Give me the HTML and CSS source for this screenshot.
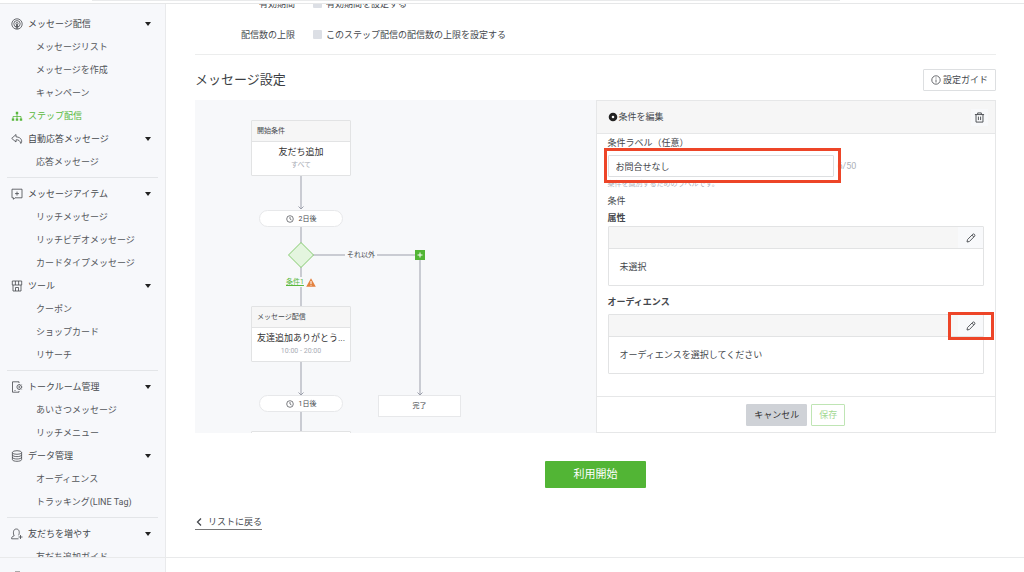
FILE: index.html
```html
<!DOCTYPE html>
<html lang="ja">
<head>
<meta charset="utf-8">
<title>ステップ配信</title>
<link rel="stylesheet" href="styles.css">
</head>
<body>
<div class="app">
  <div class="topbar"><div class="topbar-tab"></div></div>
  <div class="shell">
    <nav class="sidebar">
      <ul class="menu">
        <li><button class="menu-head" type="button"><svg class="icon" viewBox="0 0 12 12"><circle cx="6" cy="6" r="5.2"/><circle cx="6" cy="5.8" r="3.2"/><circle cx="6" cy="5.6" r="1.1"/><path d="M5.2 11 5.5 7h1l.3 4"/></svg>メッセージ配信<span class="caret"></span></button></li>
        <li><a class="menu-sub" href="#">メッセージリスト</a></li>
        <li><a class="menu-sub" href="#">メッセージを作成</a></li>
        <li><a class="menu-sub" href="#">キャンペーン</a></li>
        <li><a class="menu-head active" href="#"><svg class="icon" viewBox="0 0 12 12"><path d="M6 4v5M2 9V6.500h8V9"/><path class="solid" d="M4.800 1.800h2.400v2.400H4.800zM.8 8.500h2.400v2.300H.8zM4.800 8.500h2.400v2.300H4.800zM8.800 8.500h2.400v2.300H8.800z"/></svg>ステップ配信</a></li>
        <li><button class="menu-head" type="button"><svg class="icon" viewBox="0 0 12 12"><path d="M5 1.500.7 5.400 5 9V6.800c2.500-.2 4 .8 4.800 3.700 1.700-1.500 1.400-6.300-4.800-6.700z"/></svg>自動応答メッセージ<span class="caret"></span></button></li>
        <li><a class="menu-sub" href="#">応答メッセージ</a></li>
      </ul>
      <ul class="menu">
        <li><button class="menu-head" type="button"><svg class="icon" viewBox="0 0 12 12"><path d="M1 1.200h10v8.600H4L2.500 11.300V9.800H1zM6 3.600v4M4 5.600h4"/></svg>メッセージアイテム<span class="caret"></span></button></li>
        <li><a class="menu-sub" href="#">リッチメッセージ</a></li>
        <li><a class="menu-sub" href="#">リッチビデオメッセージ</a></li>
        <li><a class="menu-sub" href="#">カードタイプメッセージ</a></li>
        <li><button class="menu-head" type="button"><svg class="icon" viewBox="0 0 12 12"><path d="M1.300 1h9.400v4H1.300zM4.400 1v4M7.600 1v4M2 5v6h8V5M4.500 11V7.500h3V11"/></svg>ツール<span class="caret"></span></button></li>
        <li><a class="menu-sub" href="#">クーポン</a></li>
        <li><a class="menu-sub" href="#">ショップカード</a></li>
        <li><a class="menu-sub" href="#">リサーチ</a></li>
      </ul>
      <ul class="menu">
        <li><button class="menu-head" type="button"><svg class="icon" viewBox="0 0 12 12"><path d="M8 2V.8H1.500v10.400H8V10M3.500 9.500h1"/><circle cx="8.200" cy="6" r="2.300"/><circle cx="8.200" cy="6" r=".5"/><path d="M8.200 3v.8M8.200 8.200V9M10.400 6h.9M10 4.200l.6-.6M10 7.800l.6.6"/></svg>トークルーム管理<span class="caret"></span></button></li>
        <li><a class="menu-sub" href="#">あいさつメッセージ</a></li>
        <li><a class="menu-sub" href="#">リッチメニュー</a></li>
        <li><button class="menu-head" type="button"><svg class="icon" viewBox="0 0 12 12"><ellipse cx="6" cy="2.500" rx="4.600" ry="1.800"/><path d="M1.400 2.500v7c0 2.400 9.200 2.400 9.200 0v-7M1.400 4.800c0 2.400 9.200 2.400 9.200 0M1.400 7.200c0 2.400 9.200 2.400 9.200 0"/></svg>データ管理<span class="caret"></span></button></li>
        <li><a class="menu-sub" href="#">オーディエンス</a></li>
        <li><a class="menu-sub" href="#">トラッキング(LINE Tag)</a></li>
      </ul>
      <ul class="menu">
        <li><button class="menu-head" type="button"><svg class="icon" viewBox="0 0 12 12"><path d="M7.500 10.800H.6c0-2 .8-2.300 2.600-3C2 6 1.800 1 5.300 1s3.400 4.500 2.200 6.300M9.500 7v4M7.500 9h4"/></svg>友だちを増やす<span class="caret"></span></button></li>
        <li><a class="menu-sub" href="#">友だち追加ガイド</a></li>
      </ul>
    </nav>

    <main class="content">
      <div class="settings">
        <div class="setting">
          <span class="setting-name">有効期間</span>
          <label class="check"><input type="checkbox" disabled>有効期間を設定する</label>
        </div>
        <div class="setting">
          <span class="setting-name">配信数の上限</span>
          <label class="check"><input type="checkbox" disabled>このステップ配信の配信数の上限を設定する</label>
        </div>
      </div>

      <div class="section-head">
        <h2>メッセージ設定</h2>
        <button class="btn guide" type="button"><svg class="icon-s" viewBox="0 0 10 10"><circle cx="5" cy="5" r="4.200"/><path d="M5 4.500v3M5 2.500v1"/></svg>設定ガイド</button>
      </div>

      <div class="workspace">
        <div class="canvas">
          <svg class="wires" width="400" height="332" viewBox="0 0 400 332">
            <path d="M106 76v33M106 127v50M106 187v108M106 312v20M118 155h32M182 155h38M225 160v135"/>
            <path d="M103.500 106.500l2.500 2.500 2.500-2.500M103.500 292.500l2.500 2.500 2.500-2.500M222.500 292.500l2.500 2.500 2.500-2.500"/>
            <path class="diamond" d="M106 142.500 118.500 155 106 167.500 93.500 155z"/>
          </svg>
          <div class="node card start"><div class="card-head">開始条件</div><div class="card-body"><b>友だち追加</b><small>すべて</small></div></div>
          <div class="node pill wait-1"><svg class="clock" viewBox="0 0 8 8"><circle cx="4" cy="4" r="3.300"/><path d="M4 2v2l1.500 1"/></svg>2日後</div>
          <div class="node otherwise">それ以外</div>
          <button class="node add" type="button" aria-label="追加"><svg viewBox="0 0 10 10"><path d="M5 2.500v5M2.500 5h5"/></svg></button>
          <div class="node branch"><a href="#">条件1</a><svg class="warn" viewBox="0 0 10 9"><path class="tri" d="M5 .3 9.800 8.700H.2z"/><path class="mark" d="M5 3v3M5 6.800v.9"/></svg></div>
          <div class="node card message"><div class="card-head">メッセージ配信</div><div class="card-body"><b>友達追加ありがとう...</b><small>10:00 - 20:00</small></div></div>
          <div class="node pill wait-2"><svg class="clock" viewBox="0 0 8 8"><circle cx="4" cy="4" r="3.300"/><path d="M4 2v2l1.500 1"/></svg>1日後</div>
          <div class="node done">完了</div>
          <div class="node card next"></div>
        </div>

        <form class="editor">
          <div class="editor-head">
            <svg class="icon-s" viewBox="0 0 10 10"><circle class="dot" cx="5" cy="5" r="2.800"/></svg>
            <span>条件を編集</span>
            <button class="icon-btn trash" type="button" aria-label="削除"><svg viewBox="0 0 12 12"><path d="M1 2.800h10M4 2.800V1h4v1.800M2.200 2.800V11h7.600V2.800M4.800 5v3.800M7.200 5v3.800"/></svg></button>
          </div>
          <div class="editor-body">
            <label class="field-label" for="cond-label">条件ラベル（任意）</label>
            <div class="field">
              <input id="cond-label" class="text-input" type="text" value="お問合せなし">
              <span class="counter">6/50</span>
              <span class="mark-box mark-field"></span>
            </div>
            <p class="help">条件を識別するためのラベルです。</p>
            <p class="cond">条件</p>
            <h3 class="group-title">属性</h3>
            <section class="group">
              <div class="group-head"><button class="icon-btn edit" type="button" aria-label="属性を編集"><svg viewBox="0 0 10 10"><path d="M1 9 1.500 6.600 6.800 1.200c1-.9 2.800.7 1.900 1.900L3.400 8.500zM6 2.200 7.900 4"/></svg></button></div>
              <p class="group-body">未選択</p>
            </section>
            <h3 class="group-title audience">オーディエンス</h3>
            <section class="group">
              <div class="group-head"><button class="icon-btn edit" type="button" aria-label="オーディエンスを編集"><svg viewBox="0 0 10 10"><path d="M1 9 1.500 6.600 6.800 1.200c1-.9 2.800.7 1.900 1.900L3.400 8.500zM6 2.200 7.900 4"/></svg></button><span class="mark-box mark-edit"></span></div>
              <p class="group-body">オーディエンスを選択してください</p>
            </section>
          </div>
          <div class="editor-foot">
            <button class="btn cancel" type="button">キャンセル</button>
            <button class="btn save" type="button">保存</button>
          </div>
        </form>
      </div>

      <button class="launch" type="button">利用開始</button>
      <a class="back" href="#"><svg viewBox="0 0 8 10"><path d="M6 1.500 2.500 5 6 8.500"/></svg>リストに戻る</a>
    </main>
  </div>
  <div class="bottom"><div class="bottom-side"><span class="bottom-icon"></span></div></div>
</div>
</body>
</html>
```
FILE: styles.css
```css
* { box-sizing: border-box; }
body, h2, h3, p, ul { margin: 0; padding: 0; }
body {
  font: 9px/18px Roboto, "Noto Sans CJK JP", sans-serif;
  color: #45484d;
  background: #fff;
}
button, input { font: inherit; color: inherit; }
button { cursor: pointer; }
a { color: inherit; text-decoration: none; }
svg { fill: none; stroke: currentColor; flex: none; }

.app { display: flex; flex-direction: column; height: 100vh; overflow: hidden; }
.topbar { flex: none; height: 4px; border-bottom: 1px solid #e6e7e8; }
.topbar-tab { height: 1px; margin: 0 18% 0 9%; background: #e9eaeb; }
.shell { flex: 1; min-height: 0; display: flex; }

.sidebar {
  flex: none;
  width: 166px;
  padding: 8px 7px 0;
  overflow: hidden;
  background: #f7f8fb;
  border-right: 1px solid #e9eaec;
}
.menu { list-style: none; }
.menu + .menu { margin-top: 4px; padding-top: 4px; border-top: 1px solid #e3e5e8; }
.menu-head, .menu-sub { display: flex; align-items: center; width: 100%; height: 23px; }
.menu-head { gap: 5px; padding: 0 7px 0 4px; border: 0; background: none; text-align: left; }
.menu-sub { padding-left: 29px; color: #54575c; }
.menu .active { color: #59b83c; }
.icon { width: 12px; height: 12px; stroke-width: 0.8; }
.solid { fill: currentColor; stroke: none; }
.caret {
  margin-left: auto;
  border: 3px solid transparent;
  border-top: 4px solid #222;
  border-bottom: 0;
}

.content { flex: 1; min-width: 0; padding: 0 28px 0 29px; overflow: hidden; }
.settings { margin-top: -16px; padding-bottom: 4px; border-bottom: 1px solid #eceded; }
.setting { display: grid; grid-template-columns: 100px 1fr; gap: 18px; height: 31px; align-items: center; }
.setting-name { text-align: right; }
.check { display: flex; align-items: center; gap: 4px; }
.check input { appearance: none; width: 9px; height: 9px; margin: 0; border-radius: 1px; background: #dcdfe5; }

.section-head { display: flex; align-items: center; justify-content: space-between; height: 45px; padding-top: 4px; }
h2 { font-size: 13px; font-weight: 400; line-height: 20px; color: #3c3f44; }
.btn {
  display: flex;
  align-items: center;
  justify-content: center;
  gap: 2px;
  height: 22px;
  padding: 0 7px;
  border: 1px solid #dddfe1;
  border-radius: 1px;
  background: #fff;
}
.icon-s { width: 10px; height: 10px; stroke-width: 0.8; }

.workspace { display: grid; grid-template-columns: 1fr 1fr; }
.canvas { position: relative; min-height: 332px; overflow: hidden; background: #f7f8fa; }
.wires { position: absolute; top: 0; left: 0; stroke: #9c9fab; }
.diamond { fill: #e4f5df; stroke: #85cb70; }
.node { position: absolute; font-size: 7px; line-height: 12px; }
.card { left: 56px; width: 100px; height: 56px; border: 1px solid #e2e3e4; border-radius: 1px; background: #fff; }
.card-head { height: 21px; padding: 0 5px; line-height: 20px; background: #f6f6f6; border-bottom: 1px solid #e2e3e4; }
.card-body { padding-top: 3px; text-align: center; white-space: nowrap; }
.card-body b { display: block; font-size: 9px; line-height: 14px; font-weight: 400; color: #333; }
.card-body small { display: block; font-size: 7px; color: #a9acb5; }
.start { top: 20px; }
.message { top: 206px; }
.next { top: 331px; }
.pill {
  display: flex;
  align-items: center;
  justify-content: center;
  gap: 5px;
  left: 64px;
  width: 84px;
  height: 17px;
  border: 1px solid #e7e8ea;
  border-radius: 9px;
  background: #fff;
}
.wait-1 { top: 110px; }
.wait-2 { top: 295px; }
.clock { width: 8px; height: 8px; stroke-width: 0.7; }
.otherwise { top: 149px; left: 151px; width: 30px; text-align: center; white-space: nowrap; }
.add { top: 150px; left: 220px; width: 10px; height: 10px; padding: 0; border: 0; background: #52b535; color: #fff; }
.add svg { display: block; width: 10px; height: 10px; }
.branch { display: flex; align-items: center; gap: 2px; top: 176px; left: 91px; color: #59b83c; }
.branch a { text-decoration: underline; }
.warn { width: 10px; height: 9px; stroke: none; }
.tri { fill: #e3813f; }
.mark { stroke: #fff; }
.done { top: 295px; left: 183px; width: 83px; height: 22px; border: 1px solid #e7e8ea; background: #fff; line-height: 20px; text-align: center; }

.editor { border: 1px solid #e6e7e8; }
.editor-head { display: flex; align-items: center; gap: 1px; height: 33px; padding: 0 7px 0 11px; background: #f6f6f6; border-bottom: 1px solid #e6e7e8; }
.dot { stroke: #222; stroke-width: 3; }
.icon-btn { display: grid; place-items: center; padding: 0; border: 0; background: #f8f9fb; }
.trash { width: 17px; height: 17px; margin-left: auto; }
.trash svg { width: 11px; height: 11px; }
.editor-body { padding: 0 11px 22px 11px; }
.field-label { display: block; }
.field { position: relative; display: flex; align-items: center; gap: 4px; margin-top: 3px; }
.text-input { width: 226px; height: 22px; padding: 0 7px; border: 1px solid #dddfe1; border-radius: 1px; background: #fff; }
.counter { color: #adb1b8; }
.mark-box { position: absolute; border: 3px solid #ed4528; pointer-events: none; }
.mark-field { top: -7px; left: -4px; width: 237px; height: 35px; }
.help { font-size: 7px; line-height: 14px; color: #b0b3bb; }
.cond { margin-top: 1px; }
.group-title { font-size: 9px; line-height: 16px; font-weight: 700; }
.audience { margin: 8px 0 4px; }
.group { border: 1px solid #e2e3e4; border-radius: 1px; }
.group-head { position: relative; display: flex; justify-content: flex-end; height: 22px; background: #f6f6f6; border-bottom: 1px solid #e2e3e4; }
.edit { width: 25px; }
.edit svg { width: 10px; height: 10px; stroke-width: 0.9; }
.mark-edit { top: -3px; right: -11px; width: 46px; height: 28px; }
.group-body { padding: 9px 11px; }
.editor-foot { display: flex; justify-content: center; gap: 4px; padding: 7px 0 6px; border-top: 1px solid #e6e7e8; }
.cancel { border-color: #cfd2d7; background: #cfd2d7; color: #333; }
.save { border-color: #bfe5b4; color: #a3d893; }

.launch {
  display: block;
  width: 101px;
  height: 27px;
  margin: 28px auto 27px;
  padding: 0;
  border: 0;
  border-radius: 1px;
  background: #52b535;
  color: #fff;
  font-size: 11px;
}
.back { display: inline-flex; align-items: center; gap: 5px; height: 15px; border-bottom: 1px solid #777; }
.back svg { width: 8px; height: 10px; stroke-width: 1.300; }

.bottom { flex: none; height: 15px; border-top: 1px solid #e9eaeb; }
.bottom-side { display: flex; align-items: flex-end; width: 166px; height: 100%; padding-left: 15px; background: #f7f8fb; border-right: 1px solid #e9eaec; }
.bottom-icon { width: 5px; height: 1px; background: #aaa; }
```
